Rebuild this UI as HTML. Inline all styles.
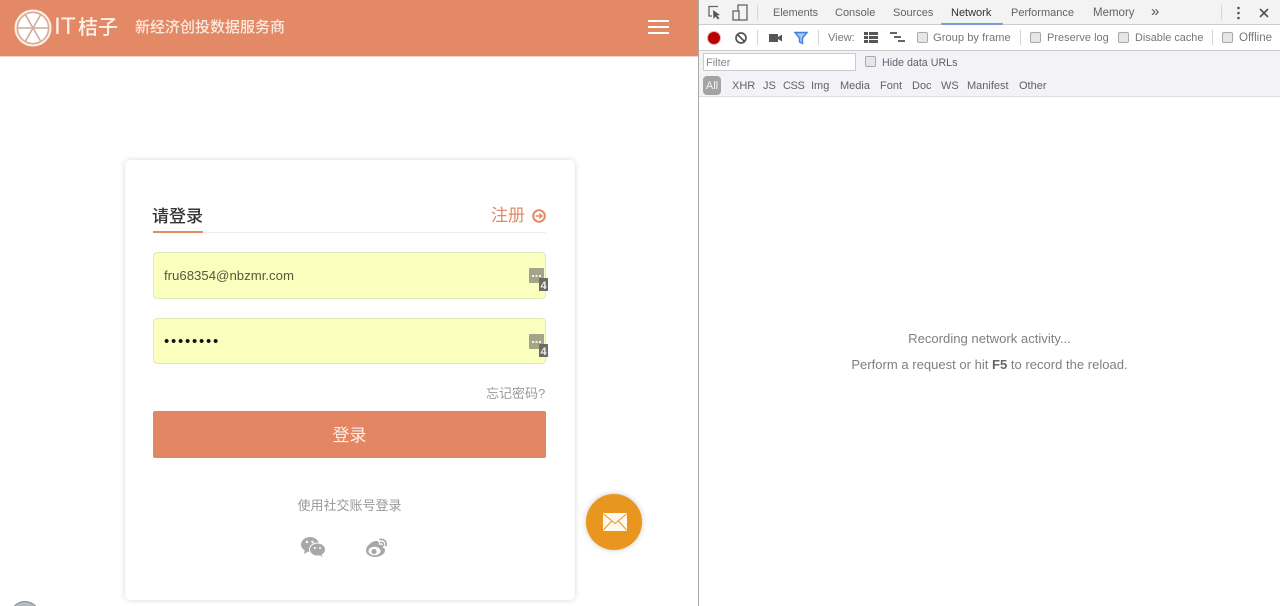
<!DOCTYPE html>
<html lang="zh"><head><meta charset="utf-8"><title>IT桔子</title>
<style>
html,body{margin:0;padding:0;width:1280px;height:606px;overflow:hidden;background:#fff;font-family:"Liberation Sans","Noto Sans CJK SC",sans-serif}
#root{left:0;top:0;width:1280px;height:606px;overflow:hidden;background:#fff;filter:blur(.35px)}
div,span,svg{position:absolute;white-space:nowrap}
.t{font-size:11px;color:#5f6368;line-height:14px}
.cb{width:9px;height:9px;border:1px solid #a9a9a9;background:#e6e6e6;border-radius:2px}
.sep{width:1px;background:#d6d6d6}
</style></head><body>
<div id="root">
<!-- header -->
<div style="left:0;top:0;width:699px;height:57px;background:#e38966;border-bottom:1px solid #ecd6cc;box-sizing:border-box"></div>
<svg style="left:14px;top:9px" width="38" height="38" viewBox="0 0 38 38">
<circle cx="19" cy="19" r="17.500" fill="#dcae9a" stroke="#fdf0e9" stroke-width="2"/>
<circle cx="19" cy="19" r="14.800" fill="#fff"/>
<g stroke="#cfa897" stroke-width="1.500"><path d="M4 19H34"/><path d="M11.500 6L26.500 32"/><path d="M26.500 6L11.500 32"/></g></svg>
<div style="left:54px;top:13px;font-size:24.500px;line-height:28px;color:#fdf1eb">IT</div>
<div style="left:78px;top:14px;font-size:20px;line-height:28px;color:#fdf1eb;font-weight:500">桔子</div>
<div style="left:135px;top:18px;font-size:15px;line-height:20px;color:#fbe9e0;font-weight:500">新经济创投数据服务商</div>
<div style="left:648px;top:20px;width:21px;height:2px;background:#fff"></div>
<div style="left:648px;top:26px;width:21px;height:2px;background:#fff"></div>
<div style="left:648px;top:32px;width:21px;height:2px;background:#fff"></div>

<!-- card -->
<div style="left:125px;top:160px;width:450px;height:440px;background:#fff;border-radius:5px;box-shadow:0 0 6px rgba(0,0,0,.16)"></div>
<div style="left:152px;top:205px;font-size:17px;line-height:24px;color:#333;font-weight:500">请登录</div>
<div style="left:153px;top:232px;width:393px;height:1px;background:#eee"></div>
<div style="left:153px;top:231px;width:50px;height:2px;background:#e38966"></div>
<div style="left:491px;top:205px;font-size:17px;line-height:22px;color:#e08a6b">注册</div>
<svg style="left:531px;top:208px" width="16" height="16" viewBox="0 0 16 16"><circle cx="8" cy="8" r="5.800" fill="none" stroke="#e38966" stroke-width="2"/><path d="M4.500 8H10.500M8.200 5.500L11 8L8.200 10.500" fill="none" stroke="#e38966" stroke-width="1.500"/></svg>

<div style="left:153px;top:252px;width:393px;height:47px;box-sizing:border-box;background:#fbffbd;border:1px solid #e4e8b8;border-radius:4px"></div>
<div style="left:164px;top:267px;font-size:13.200px;line-height:17px;color:#55593e">fru68354@nbzmr.com</div>
<div style="left:153px;top:318px;width:393px;height:46px;box-sizing:border-box;background:#fbffbd;border:1px solid #e4e8b8;border-radius:4px"></div>
<div style="left:164px;top:333px;font-size:15px;line-height:17px;color:#111;letter-spacing:1.750px">••••••••</div>

<svg style="left:529px;top:268px" width="20" height="24" viewBox="0 0 20 24"><rect x="0" y="0" width="15" height="15" rx="1" fill="#a3a48a"/><g fill="#f5f5dc"><rect x="3" y="7" width="2" height="2"/><rect x="6.500" y="7" width="2" height="2"/><rect x="10" y="7" width="2" height="2"/></g><rect x="10" y="10" width="9" height="13" fill="#6c6c62"/><text x="14.500" y="21" text-anchor="middle" font-size="11" font-weight="700" fill="#eee" font-family="Liberation Sans">4</text></svg>
<svg style="left:529px;top:334px" width="20" height="24" viewBox="0 0 20 24"><rect x="0" y="0" width="15" height="15" rx="1" fill="#a3a48a"/><g fill="#f5f5dc"><rect x="3" y="7" width="2" height="2"/><rect x="6.500" y="7" width="2" height="2"/><rect x="10" y="7" width="2" height="2"/></g><rect x="10" y="10" width="9" height="13" fill="#6c6c62"/><text x="14.500" y="21" text-anchor="middle" font-size="11" font-weight="700" fill="#eee" font-family="Liberation Sans">4</text></svg>

<div style="left:486px;top:385px;font-size:13px;line-height:17px;color:#999">忘记密码?</div>
<div style="left:153px;top:411px;width:393px;height:47px;background:#e38664;border-radius:2px;color:#fbeee8;font-size:17px;line-height:49px;text-align:center">登录</div>
<div style="left:153px;top:497px;width:393px;text-align:center;font-size:13px;line-height:18px;color:#999">使用社交账号登录</div>

<svg style="left:300px;top:536px" width="26" height="22" viewBox="0 0 26 22"><ellipse cx="10" cy="8.500" rx="9" ry="7.500" fill="#a8a8a8"/><path d="M5 13L4 18L9 15Z" fill="#a8a8a8"/><ellipse cx="17.500" cy="13.500" rx="8" ry="6.500" fill="#a8a8a8" stroke="#fff" stroke-width="1"/><path d="M21 18L23 21L19 19Z" fill="#a8a8a8"/><g fill="#fff"><circle cx="7" cy="6" r="1.200"/><circle cx="12.500" cy="6" r="1.200"/><circle cx="15" cy="12" r="1"/><circle cx="20" cy="12" r="1"/></g></svg>
<svg style="left:365px;top:537px" width="24" height="21" viewBox="0 0 24 21"><path d="M1 13.500C1 9 7 4 11 4C13.500 4 14.500 5.500 13.800 8C17 7 18.500 8.500 17.800 10.500C19.500 11 20 12 20 13.500C20 17 15 20 10 20C5 20 1 17.500 1 13.500Z" fill="#a8a8a8"/><ellipse cx="9.500" cy="14" rx="6" ry="4.300" fill="#fff"/><circle cx="9" cy="14.500" r="2.600" fill="#a8a8a8"/><path d="M15 2.500C18.500 1.500 22 4.500 21 8.500M15.500 5.500C17.500 5 19 6.500 18.500 8.500" fill="none" stroke="#a8a8a8" stroke-width="1.600" stroke-linecap="round"/></svg>

<!-- float -->
<div style="left:586px;top:494px;width:56px;height:56px;border-radius:50%;background:#e8961f;box-shadow:0 0 6px rgba(0,0,0,.22)"></div>
<svg style="left:603px;top:513px" width="24" height="18" viewBox="0 0 24 18"><rect width="24" height="18" rx="1" fill="#fff8ee"/><path d="M0.500 1L12 10.500L23.500 1M0.500 17L8.500 8M23.500 17L15.500 8" fill="none" stroke="#e8961f" stroke-width="1"/></svg>
<div style="left:10px;top:601px;width:30px;height:30px;border-radius:50%;background:#b3bcc2;border:1px solid #7f8c94;box-sizing:border-box"></div>

<!-- devtools -->
<div style="left:698px;top:0;width:1px;height:606px;background:#a8a8a8"></div>
<div style="left:699px;top:0;width:581px;height:25px;background:#f3f3f3;border-bottom:1px solid #ccc;box-sizing:border-box"></div>
<svg style="left:707px;top:5px" width="15" height="16" viewBox="0 0 15 16"><path d="M11 1.500H2V11H5" fill="none" stroke="#666" stroke-width="1.300"/><path d="M6 5L6.500 14L8.500 11.500L11 14.500L12.500 13.200L10 10.500L13 10Z" fill="#555"/></svg>
<svg style="left:732px;top:4px" width="16" height="17" viewBox="0 0 16 17"><rect x="6" y="1" width="9" height="15" fill="none" stroke="#666" stroke-width="1.300"/><rect x="1" y="7" width="6" height="9" fill="#f3f3f3" stroke="#666" stroke-width="1.300"/></svg>
<div class="sep" style="left:757px;top:5px;height:15px"></div>
<div class="t" style="left:773px;top:6px;font-size:10.800px">Elements</div>
<div class="t" style="left:835px;top:6px">Console</div>
<div class="t" style="left:893px;top:6px">Sources</div>
<div class="t" style="left:951px;top:6px;color:#333">Network</div>
<div style="left:941px;top:23px;width:62px;height:2px;background:#7a9ed6"></div>
<div class="t" style="left:1011px;top:6px">Performance</div>
<div class="t" style="left:1093px;top:6px;font-size:11.500px">Memory</div>
<div class="t" style="left:1151px;top:5px;font-size:15px;color:#555">»</div>
<div class="sep" style="left:1221px;top:5px;height:15px"></div>
<svg style="left:1236px;top:6px" width="5" height="14" viewBox="0 0 5 14"><g fill="#555"><circle cx="2.500" cy="2" r="1.300"/><circle cx="2.500" cy="7" r="1.300"/><circle cx="2.500" cy="12" r="1.300"/></g></svg>
<svg style="left:1259px;top:8px" width="10" height="10" viewBox="0 0 10 10"><path d="M1 1L9 9M9 1L1 9" stroke="#555" stroke-width="1.700"/></svg>

<div style="left:699px;top:25px;width:581px;height:26px;background:#fff;border-bottom:1px solid #ccc;box-sizing:border-box"></div>
<div style="left:708px;top:32px;width:12px;height:12px;border-radius:50%;background:#b80000;box-shadow:0 0 0 1px #e8b0b0"></div>
<svg style="left:734px;top:31px" width="14" height="14" viewBox="0 0 14 14"><circle cx="7" cy="7" r="5" fill="none" stroke="#555" stroke-width="1.700"/><path d="M3.500 3.500L10.500 10.500" stroke="#555" stroke-width="1.700"/></svg>
<div class="sep" style="left:757px;top:30px;height:15px"></div>
<svg style="left:769px;top:33px" width="13" height="10" viewBox="0 0 13 10"><rect x="0" y="1" width="9" height="8" fill="#555"/><path d="M9 4L13 1.500V8.500L9 6Z" fill="#555"/></svg>
<svg style="left:794px;top:31px" width="14" height="14" viewBox="0 0 14 14"><path d="M1 1.500H13L8.500 7V12.500L5.500 11V7Z" fill="#a9c8f0" stroke="#3f7fdc" stroke-width="1.400"/></svg>
<div class="sep" style="left:818px;top:30px;height:15px"></div>
<div class="t" style="left:828px;top:31px;color:#777">View:</div>
<svg style="left:864px;top:32px" width="14" height="11" viewBox="0 0 14 11"><g fill="#555"><rect x="0" y="0" width="4" height="3"/><rect x="5" y="0" width="9" height="3"/><rect x="0" y="4" width="4" height="3"/><rect x="5" y="4" width="9" height="3"/><rect x="0" y="8" width="4" height="3"/><rect x="5" y="8" width="9" height="3"/></g></svg>
<svg style="left:890px;top:32px" width="15" height="11" viewBox="0 0 15 11"><g fill="#666"><rect x="0" y="0" width="7" height="2"/><rect x="4" y="4" width="7" height="2"/><rect x="8" y="8" width="7" height="2"/></g></svg>
<div class="cb" style="left:917px;top:32px"></div><div class="t" style="left:933px;top:31px;color:#777;font-size:11.200px">Group by frame</div>
<div class="sep" style="left:1020px;top:30px;height:15px"></div>
<div class="cb" style="left:1030px;top:32px"></div><div class="t" style="left:1047px;top:31px;color:#777">Preserve log</div>
<div class="cb" style="left:1118px;top:32px"></div><div class="t" style="left:1135px;top:31px;color:#777;font-size:10.900px">Disable cache</div>
<div class="sep" style="left:1212px;top:30px;height:15px"></div>
<div class="cb" style="left:1222px;top:32px"></div><div class="t" style="left:1239px;top:31px;color:#777;font-size:11.500px">Offline</div>

<div style="left:699px;top:51px;width:581px;height:46px;background:#f3f2f7;border-bottom:1px solid #ddd;box-sizing:border-box"></div>
<div style="left:703px;top:53px;width:153px;height:18px;box-sizing:border-box;background:#fff;border:1px solid #ccc"></div>
<div class="t" style="left:706px;top:56px;color:#888">Filter</div>
<div class="cb" style="left:865px;top:56px"></div><div class="t" style="left:882px;top:56px;font-size:10.700px">Hide data URLs</div>
<div style="left:703px;top:76px;width:18px;height:19px;border-radius:4px;background:#a3a3a3;color:#f3f3f3;font-size:11px;line-height:20px;text-align:center">All</div>
<div class="t" style="left:732px;top:79px">XHR</div>
<div class="t" style="left:763px;top:79px">JS</div>
<div class="t" style="left:783px;top:79px;letter-spacing:-.4px">CSS</div>
<div class="t" style="left:811px;top:79px">Img</div>
<div class="t" style="left:840px;top:79px">Media</div>
<div class="t" style="left:880px;top:79px">Font</div>
<div class="t" style="left:912px;top:79px">Doc</div>
<div class="t" style="left:941px;top:79px">WS</div>
<div class="t" style="left:967px;top:79px">Manifest</div>
<div class="t" style="left:1019px;top:79px">Other</div>

<div style="left:699px;top:331px;width:581px;text-align:center;font-size:13.100px;line-height:16px;color:#808080">Recording network activity...</div>
<div style="left:699px;top:357px;width:581px;text-align:center;font-size:13.050px;line-height:16px;color:#808080">Perform a request or hit <b style="color:#666">F5</b> to record the reload.</div>
</div>
</body></html>
